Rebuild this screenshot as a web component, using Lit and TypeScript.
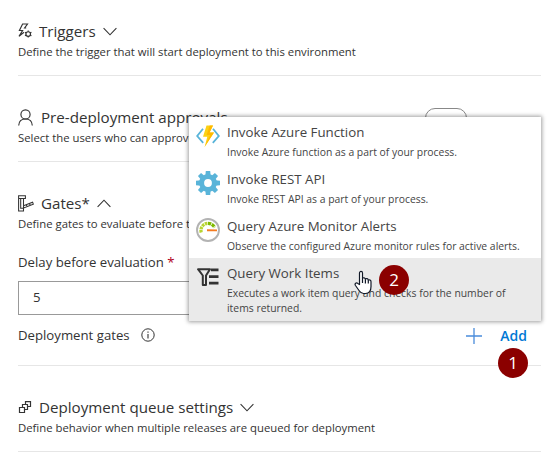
import { LitElement, html, css, svg, TemplateResult } from "lit";
import { customElement, property } from "lit/decorators.js";
import { classMap } from "lit/directives/class-map.js";

const teeth = [0, 45, 90, 135, 180, 225, 270, 315];

const icons: Record<string, TemplateResult> = {
  trigger: html`<svg width="14" height="16" viewBox="0 0 14 16" fill="none" stroke="#333" stroke-width="1.15">
    <path d="M8.2 5H6.6L9.5 1H4.6L1.4 7.5H4.6L1 13.4 6 9.2" />
    <circle cx="10.2" cy="11" r="2.3" />
    <path d="M10.2 7.4V8.7M10.2 13.3V14.6M7 9.2 8.200 9.900M12.200 12.100 13.400 12.800M7 12.800 8.200 12.100M12.200 9.900 13.400 9.200" />
  </svg>`,
  person: html`<svg width="15" height="17" viewBox="0 0 15 17" fill="none" stroke="#333" stroke-width="1.15">
    <circle cx="7.5" cy="5.4" r="4.6" />
    <path d="M.7 16.5C.9 12.4 3.6 10 7.5 10s6.6 2.4 6.800 6.500" />
  </svg>`,
  gate: html`<svg width="16" height="17" viewBox="0 0 16 17" fill="none" stroke="#333" stroke-width="1.05">
    <path d="M.6 .7H7.400V3.500H.6ZM.6 3.500V15.900H5.500V12.800M5.500 10.800V3.500M2.700 3.500V13.200H5.500" />
    <path d="M5.500 10.800 14.600 7.200 15.300 9.200 5.500 12.900ZM8.300 9.800 9 11.500M11.500 8.500 12.200 10.300" />
  </svg>`,
  queue: html`<svg width="14" height="13" viewBox="0 0 14 13" fill="none" stroke="#333" stroke-width="1.2">
    <path d="M1.500 6.500H6.500V11.500H1.500ZM4.500 6.500V3.500H9.500V8.500H6.500M7.500 3.500V.6H12.500V5.500H9.500" />
  </svg>`,
  func: html`<svg width="24" height="24" viewBox="0 0 24 24">
    <path d="M7 4.8 1.2 12 7.2 18.8M17 4.8 22.8 12 16.800 18.800" fill="none" stroke="#59b4d9" stroke-width="1.8" />
    <path d="M10.500 1.500H17L13.600 8.500H18L8.600 23 11.300 12.800H7Z" fill="#fcd116" />
    <path d="M13.800 1.500H17L13.600 8.500H18L8.600 23 14.200 11H10.600Z" fill="#ffb900" />
  </svg>`,
  gear: html`<svg width="24" height="24" viewBox="0 0 24 24">
    ${teeth.map((a) => svg`<path d="M9.3 5 9.800 0H14.200L14.700 5Z" fill="#59b4d9" transform="rotate(${a} 12 12)" />`)}
    <circle cx="12" cy="12" r="6.4" fill="none" stroke="#59b4d9" stroke-width="5" />
  </svg>`,
  gauge: html`<svg width="24" height="24" viewBox="0 0 24 24" fill="none">
    <circle cx="12" cy="12" r="11" fill="#fff" stroke="#b3b3b3" stroke-width="1.9" />
    <path d="M5.2 14.5A7.2 7.2 0 0 1 12 5.3" stroke="#b8d432" stroke-width="3.3" stroke-dasharray="2.6 .7" />
    <path d="M12 5.3A7.2 7.2 0 0 1 18.600 9.500" stroke="#7fba00" stroke-width="3.3" stroke-dasharray="3.2 .7" />
    <path d="M11 11.200 21 11.500V13.300L11 13.300Z" fill="#f47b20" />
  </svg>`,
  filter: html`<svg width="24" height="24" viewBox="0 0 24 24">
    <path d="M2 4.2H14L10 10.5V20H6.8V10.5Z" fill="none" stroke="#333" stroke-width="2" stroke-linejoin="round" />
    <path d="M15 3.5H22.5V6.3H15ZM13 10.3H22.5V13H13ZM13 16.8H22.5V19.6H13Z" fill="#333" />
  </svg>`,
};

@customElement("section-heading")
class SectionHeading extends LitElement {
  @property() icon = "";
  @property() heading = "";
  @property() text = "";
  @property({ type: Boolean }) open = false;
  @property({ type: Boolean }) toggle = false;

  static styles = css`
    :host { display: block; }
    .row { display: flex; align-items: center; height: 24px; }
    .icon { display: flex; margin-right: 7px; }
    .icon.person { margin-right: 8px; }
    .title { font-size: 15.15px; line-height: 24px; white-space: nowrap; }
    .chevron { margin-left: 7px; }
    .switch { box-sizing: border-box; width: 42px; height: 20px; margin: 2px 74px 0 auto; border: 1px solid #888; border-radius: 10px; }
    .text { font-size: 11.34px; line-height: 18px; height: 18px; white-space: nowrap; }
  `;

  render() {
    return html`
      <div class="row">
        <span class="icon ${this.icon}">${icons[this.icon]}</span>
        <span class="title">${this.heading}</span>
        ${this.toggle
          ? html`<span class="switch"></span>`
          : html`<svg class="chevron" width="14" height="9" viewBox="0 0 14 9" fill="none" stroke="#333" stroke-width="1.1">
              <path d=${this.open ? "M.6 7.8 7 1.2 13.4 7.8" : "M.6 1.2 7 7.8 13.4 1.2"} />
            </svg>`}
      </div>
      <div class="text">${this.text}</div>
    `;
  }
}

interface Gate { icon: string; title: string; text: string; active?: boolean; }

const gates: Gate[] = [
  { icon: "func", title: "Invoke Azure Function", text: "Invoke Azure function as a part of your process." },
  { icon: "gear", title: "Invoke REST API", text: "Invoke REST API as a part of your process." },
  { icon: "gauge", title: "Query Azure Monitor Alerts", text: "Observe the configured Azure monitor rules for active alerts." },
  { icon: "filter", title: "Query Work Items", text: "Executes a work item query and checks for the number of items returned.", active: true },
];

@customElement("gate-menu")
class GateMenu extends LitElement {
  static styles = css`
    :host { display: block; box-sizing: border-box; background: #fff; color: #444; box-shadow: 0 0 4px 1px rgba(0, 0, 0, 0.38); }
    .item { display: flex; box-sizing: border-box; height: 47px; padding: 6px 20px 0 7px; }
    .item.active { height: 63px; background: #eaeaea; }
    .icon { display: flex; height: 24px; margin: 1px 7px 0 0; }
    .title { font-size: 13.3px; line-height: 18px; color: #444; }
    .text { margin-top: 4px; font-size: 10.38px; line-height: 15px; color: #444; }
  `;

  render() {
    return gates.map((g) => html`
      <div class=${classMap({ item: true, active: !!g.active })}>
        <span class="icon">${icons[g.icon]}</span>
        <div>
          <div class="title">${g.title}</div>
          <div class="text">${g.text}</div>
        </div>
      </div>`);
  }
}

@customElement("app-root")
class AppRoot extends LitElement {
  static styles = css`
    :host { display: block; position: relative; box-sizing: border-box; width: 555px; height: 455px; padding: 0 14px 0 18px; overflow: hidden; background: #fff; color: #333; font-family: "Open Sans", "Noto Sans", sans-serif; }
    section { box-sizing: border-box; height: 86px; padding-top: 29px; border-bottom: 1px solid #e6e6e6; }
    section.first { height: 76px; padding-top: 19px; }
    section.gates { height: 204px; }
    .label { margin-top: 19px; font-size: 13.2px; line-height: 20px; }
    .required { color: #b00020; }
    .input { box-sizing: border-box; height: 34px; margin-top: 9px; padding-left: 14px; border: 1px solid #999; font-size: 13.2px; line-height: 31px; }
    .bar { display: flex; align-items: center; height: 20px; margin-top: 10px; padding-right: 14px; font-size: 13.2px; line-height: 20px; }
    .info { margin-left: 11px; }
    .plus { margin: 2px 18px 0 auto; }
    .add { margin-top: 2px; font-size: 14px; font-weight: 600; color: #0078d4; }
    gate-menu { position: absolute; left: 189px; top: 117px; width: 352px; height: 204px; }
    .badge { position: absolute; width: 30px; height: 30px; border-radius: 50%; background: #8b0000; color: #fff; font-size: 17px; line-height: 29px; text-align: center; }
    .one { left: 498px; top: 348px; }
    .two { left: 379px; top: 265px; }
    .hand { position: absolute; left: 354px; top: 270px; }
  `;

  render() {
    return html`
      <section class="first">
        <section-heading icon="trigger" heading="Triggers" text="Define the trigger that will start deployment to this environment"></section-heading>
      </section>
      <section>
        <section-heading icon="person" heading="Pre-deployment approvals" toggle text="Select the users who can approve"></section-heading>
      </section>
      <section class="gates">
        <section-heading icon="gate" heading="Gates*" open text="Define gates to evaluate before the"></section-heading>
        <div class="label">Delay before evaluation <span class="required">*</span></div>
        <div class="input">5</div>
        <div class="bar">
          <span>Deployment gates</span>
          <svg class="info" width="14" height="14" viewBox="0 0 14 14" fill="none" stroke="#333">
            <circle cx="7" cy="7" r="6.2" /><path d="M7 6V10.5M7 3.5V4.7" stroke-width="1.1" />
          </svg>
          <svg class="plus" width="16" height="16" viewBox="0 0 16 16" stroke="#4a8cdb" stroke-width="1.3"><path d="M8 0V16M0 8H16" /></svg>
          <span class="add">Add</span>
        </div>
      </section>
      <section>
        <section-heading icon="queue" heading="Deployment queue settings" text="Define behavior when multiple releases are queued for deployment"></section-heading>
      </section>
      <gate-menu></gate-menu>
      <svg class="hand" width="18" height="25" viewBox="0 0 18 25" fill="#fff" stroke="#111827" stroke-width="1.2" stroke-linejoin="round">
        <path d="M5.500 14.500V3C5.500.9 8.500.9 8.500 3V8.500C9 7.300 11.300 7.600 11.400 9.200 12.200 8.100 14.200 8.600 14.300 10.200 15.400 9.400 17 10.200 17 11.700V16.500C17 20.500 15 23.500 11.500 23.500H9.500C7 23.500 6 22 5 20.500L1.500 15.500C.2 13.500 2.400 12.200 3.800 13.400Z" />
        <path d="M8.500 8.500V13M11.400 9.200V13.500M14.300 10.200V13.500" fill="none" />
      </svg>
      <span class="badge two">2</span>
      <span class="badge one">1</span>
    `;
  }
}
